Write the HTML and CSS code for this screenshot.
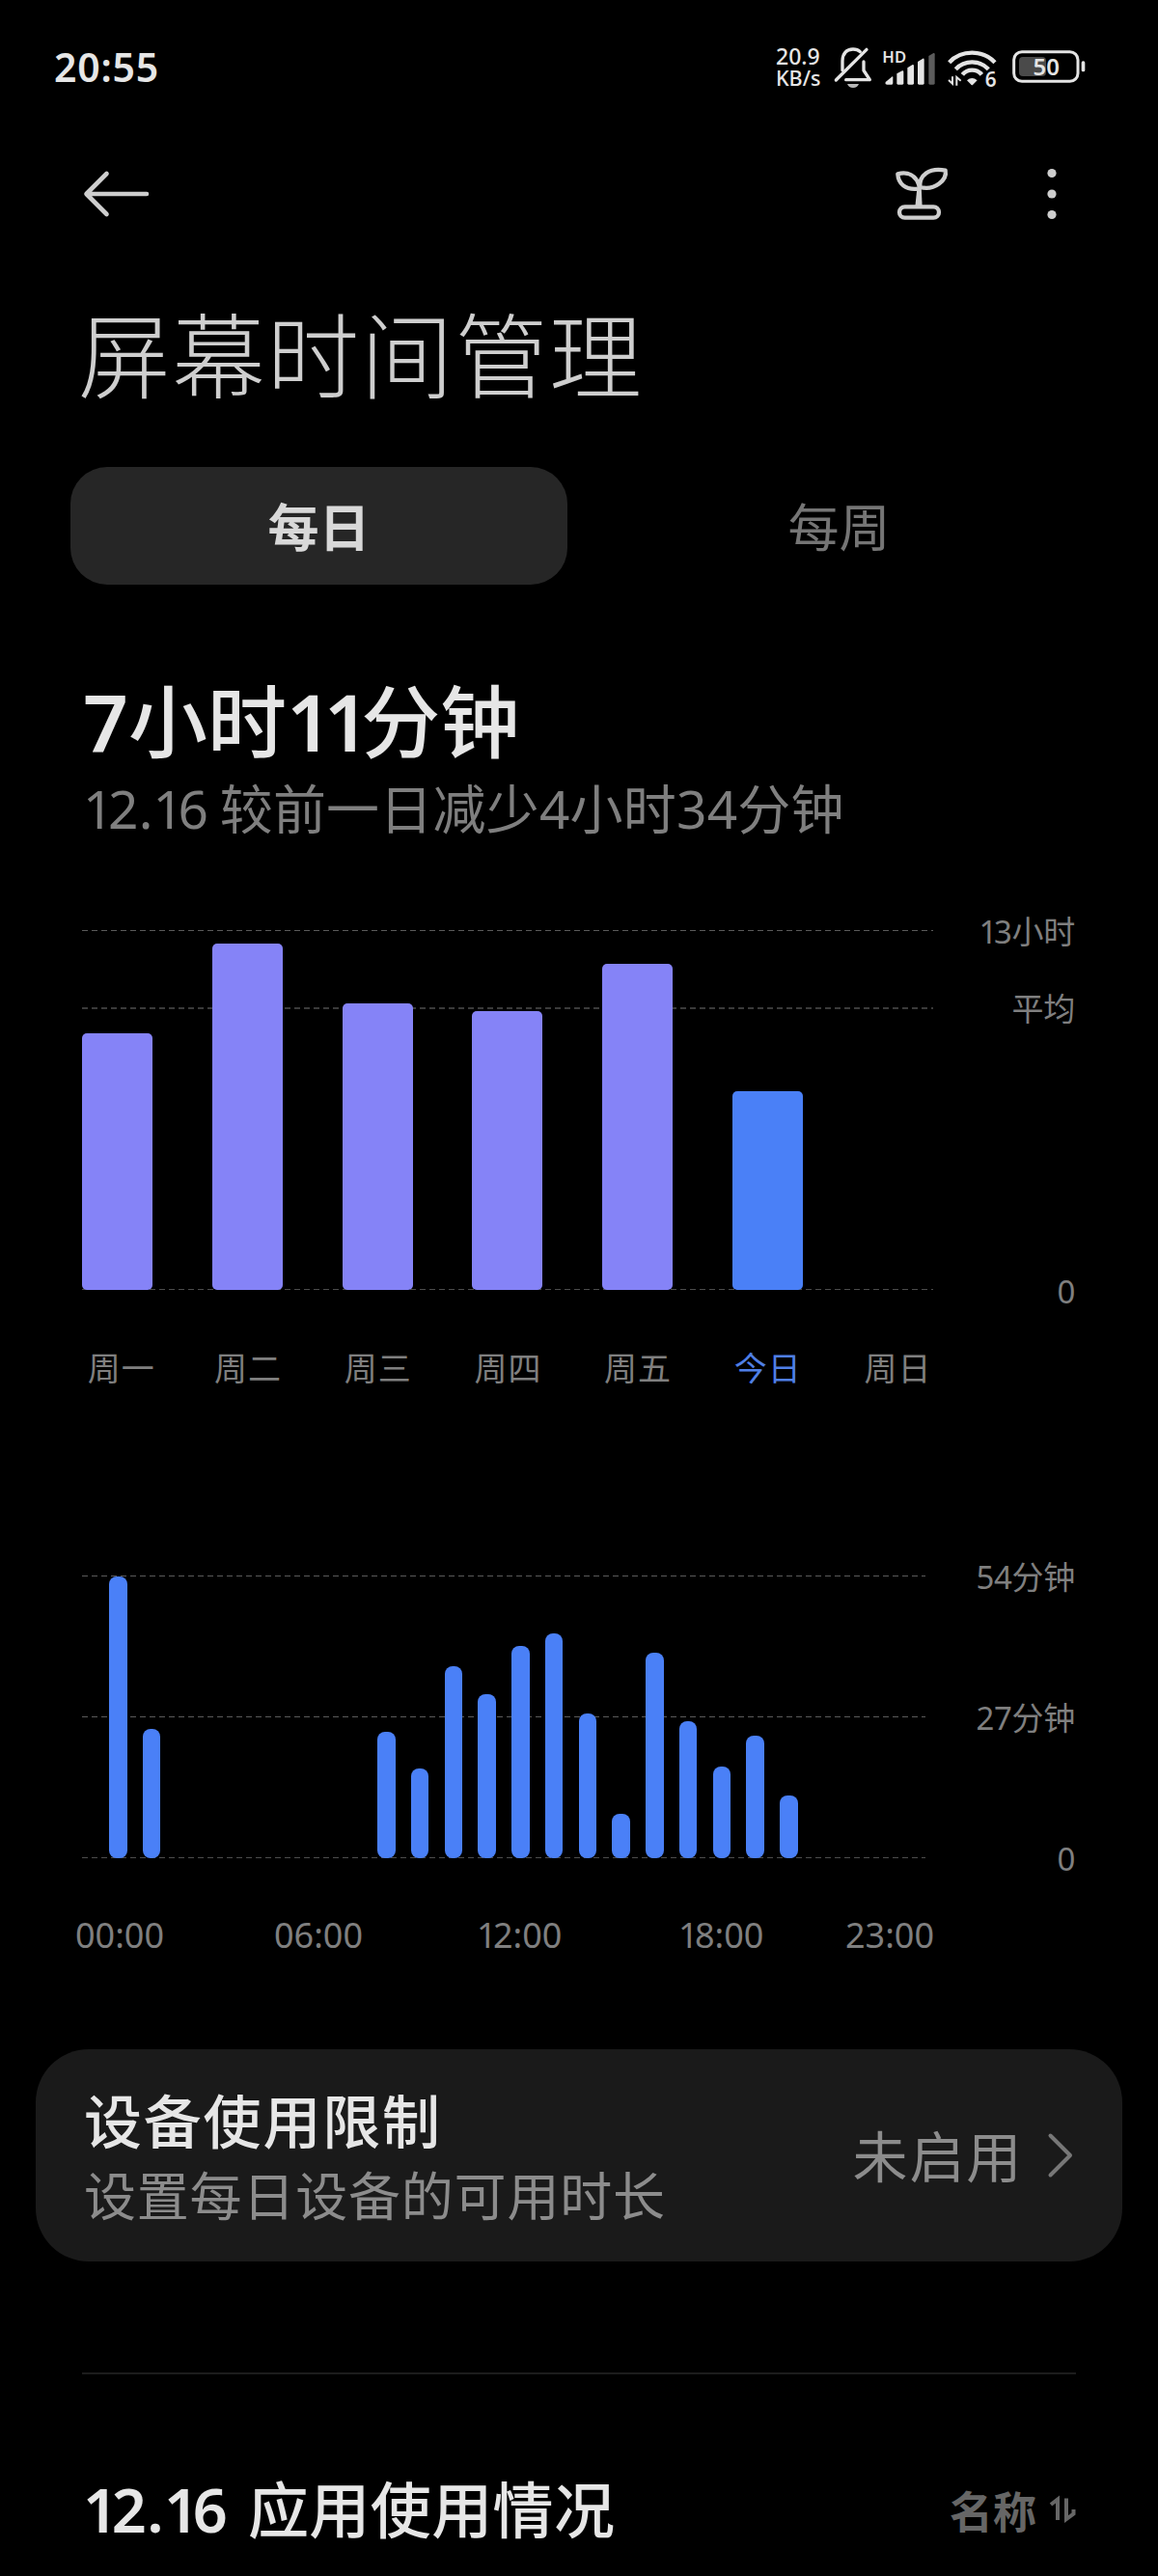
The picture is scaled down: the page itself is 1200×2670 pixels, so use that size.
FILE: index.html
```html
<!DOCTYPE html>
<html lang="zh-CN">
    <head>
        <meta charset="UTF-8">
        <title>屏幕时间管理</title>
        <link rel="stylesheet" href="styles.css">
    </head>

    <body>
        <div class="status-bar">
            <span class="clock">20:55</span>
            <div class="net-speed"><span>20.9</span><span class="unit">KB/s</span></div>
            <svg class="icon-bell" width="40" height="44" viewBox="0 0 120 132">
                <g fill="none" stroke="#e4e4e4" stroke-width="10" stroke-linecap="round" stroke-linejoin="round">
                    <path d="M7 105L102 10"/>
                    <path d="M27 74V46C27 22 40 9 60 9C70 9 77 12 82 17"/>
                    <path d="M93 48V75L112 104H38"/>
                </g>
                <path d="M42 117H78C75 125 69 129 60 129S45 125 42 117Z" fill="#b8b8b8"/>
            </svg>
            <svg class="icon-signal" width="54" height="40" viewBox="0 0 162 120">
                <text x="-2" y="49" class="hd">HD</text>
                <g fill="#e4e4e4">
                    <path d="M9 107L29 91Q31 90 31 94V112Q31 116 27 116H13Q7 116 7 111Z"/>
                    <path d="M43 82L60 73Q64 72 64 77V112Q64 116 60 116H47Q43 116 43 112Z"/>
                    <path d="M76 64L92 54Q96 53 96 58V112Q96 116 92 116H80Q76 116 76 112Z"/>
                    <path d="M108 45L124 35Q128 34 128 39V112Q128 116 124 116H112Q108 116 108 112Z"/>
                </g>
                <path d="M142 27L157 18Q161 17 161 22V112Q161 116 157 116H146Q142 116 142 112Z" fill="#5c5c5c"/>
            </svg>
            <svg class="icon-wifi" width="54" height="42" viewBox="0 0 162 126">
                <g fill="none" stroke="#e4e4e4" stroke-width="13">
                    <path d="M5 47C43 7 109 7 147 47"/>
                    <path d="M25 68C53 39 99 39 127 68"/>
                    <path d="M46 85C61 66 91 66 106 85"/>
                </g>
                <path d="M60 103Q76 89 92 103L78 117Q76 119 74 117Z" fill="#e4e4e4"/>
                <path d="M3 102L15 113V91M28 119V93L41 104" fill="none" stroke="#e4e4e4" stroke-width="6"/>
                <text x="116" y="124" class="gen">6</text>
            </svg>
            <svg class="icon-battery" width="76" height="34" viewBox="0 0 228 102">
                <rect x="5" y="5" width="199" height="92" rx="25" fill="none" stroke="#e4e4e4" stroke-width="9"/>
                <rect x="21" y="21" width="84" height="60" rx="12" fill="#4a4a4a"/>
                <rect x="215" y="34" width="11" height="33" rx="5" fill="#e4e4e4"/>
                <text x="106" y="77" class="level">50</text>
            </svg>
        </div>

        <div class="toolbar">
            <svg class="back" width="68" height="48" viewBox="0 0 68 48">
                <path d="M65 24H3M23.5 3L2.5 24L23.5 45" fill="none" stroke="#cecece" stroke-width="4.6" stroke-linecap="round" stroke-linejoin="round"/>
            </svg>
            <svg class="sprout" width="56" height="58" viewBox="0 0 168 174">
                <g fill="none" stroke="#cecece" stroke-width="13" stroke-linejoin="round">
                    <path d="M74 62C64 29 38 17 7 25C9 56 31 75 69 71"/>
                    <path d="M76 66C73 30 104 4 155 14C161 44 122 78 76 66Z"/>
                    <rect x="12" y="127" width="123" height="34" rx="17"/>
                </g>
                <path d="M68 60H80L83 127H61Z" fill="#cecece"/>
            </svg>
            <svg class="more" width="10" height="54" viewBox="0 0 10 54">
                <g fill="#cecece">
                    <circle cx="5" cy="5.5" r="4.6"/>
                    <circle cx="5" cy="27" r="4.6"/>
                    <circle cx="5" cy="48.5" r="4.6"/>
                </g>
            </svg>
        </div>

        <h1 class="title">屏幕时间管理</h1>

        <div class="tabs">
            <div class="tab active">每日</div>
            <div class="tab">每周</div>
        </div>

        <div class="total"><span class="num">7</span>小时<span class="num one">11</span>分钟</div>
        <div class="compare"><span class="one">1</span>2.<span class="one">1</span>6 较前一日减少4小时34分钟</div>

        <div class="chart week">
            <div class="plot">
                <div class="bar" style="height: 266px"></div>
                <div class="bar" style="height: 359px"></div>
                <div class="bar" style="height: 297px"></div>
                <div class="bar" style="height: 289px"></div>
                <div class="bar" style="height: 338px"></div>
                <div class="bar today" style="height: 206px"></div>
                <div class="bar" style="height: 0"></div>
            </div>
            <div class="scale">
                <span><span class="one">1</span>3小时</span>
                <span>平均</span>
                <span>0</span>
            </div>
        </div>
        <div class="days">
            <span class="first">周一</span>
            <span>周二</span>
            <span>周三</span>
            <span>周四</span>
            <span>周五</span>
            <span class="now">今日</span>
            <span>周日</span>
        </div>

        <div class="chart hours">
            <div class="plot">
                <div class="bar" style="height: 292px"></div>
                <div class="bar" style="height: 134px"></div>
                <div class="bar" style="height: 0"></div>
                <div class="bar" style="height: 0"></div>
                <div class="bar" style="height: 0"></div>
                <div class="bar" style="height: 0"></div>
                <div class="bar" style="height: 0"></div>
                <div class="bar" style="height: 0"></div>
                <div class="bar" style="height: 131px"></div>
                <div class="bar" style="height: 93px"></div>
                <div class="bar" style="height: 199px"></div>
                <div class="bar" style="height: 170px"></div>
                <div class="bar" style="height: 220px"></div>
                <div class="bar" style="height: 233px"></div>
                <div class="bar" style="height: 150px"></div>
                <div class="bar" style="height: 46px"></div>
                <div class="bar" style="height: 213px"></div>
                <div class="bar" style="height: 142px"></div>
                <div class="bar" style="height: 95px"></div>
                <div class="bar" style="height: 127px"></div>
                <div class="bar" style="height: 65px"></div>
            </div>
            <div class="scale">
                <span>54分钟</span>
                <span>27分钟</span>
                <span>0</span>
            </div>
        </div>
        <div class="times">
            <span>00:00</span>
            <span>06:00</span>
            <span><span class="one">1</span>2:00</span>
            <span><span class="one">1</span>8:00</span>
            <span>23:00</span>
        </div>

        <div class="limit-card">
            <div class="limit-text">
                <div class="limit-title">设备使用限制</div>
                <div class="limit-desc">设置每日设备的可用时长</div>
            </div>
            <span class="limit-state">未启用</span>
            <svg class="chevron" width="26" height="46" viewBox="0 0 26 46">
                <path d="M2.5 2.5L23 23L2.5 43.5" fill="none" stroke="#777" stroke-width="4" stroke-linecap="round" stroke-linejoin="round"/>
            </svg>
        </div>

        <div class="apps-header">
            <h2><span class="num"><span class="one">1</span>2.<span class="one">1</span>6</span> 应用使用情况</h2>
            <span class="sort">名称</span>
            <svg class="sort-icon" width="28" height="26" viewBox="0 0 28 26">
                <path d="M2 8L9 2.5V24M18 1.5V23L25.5 17.5V13" fill="none" stroke="#666" stroke-width="4"/>
            </svg>
        </div>
    </body>

</html>
```

FILE: styles.css
```css
* {
    box-sizing: border-box;
}

body {
    margin: 0;
    width: 1200px;
    height: 2670px;
    overflow: hidden;
    background-color: #000;
    color: #e6e6e6;
    font-family: "Noto Sans", "Noto Sans CJK SC", sans-serif;
    white-space: nowrap;
}

svg {
    overflow: visible;
}

/* the "1" is narrower than the other digits */
.one {
    letter-spacing: -0.1em;
}

.num {
    font-weight: 600;
}

.status-bar {
    display: flex;
    align-items: flex-start;
    height: 140px;
    padding: 47px 75px 0 56px;
}

.clock {
    margin-right: auto;
    font-size: 41px;
    font-weight: 600;
    line-height: 44px;
    letter-spacing: 0.8px;
}

.net-speed {
    display: flex;
    flex-direction: column;
    width: 50px;
    margin-right: 10px;
    font-size: 23px;
    font-weight: 500;
    line-height: 23px;
}

.net-speed .unit {
    font-size: 21.5px;
    line-height: 22px;
}

.icon-bell {
    margin: 1px 11px 0 0;
}

.icon-signal {
    margin: 2px 13px 0 0;
}

.icon-wifi {
    margin: 2px 13px 0 0;
}

.icon-battery {
    margin-top: 5px;
}

.status-bar text {
    fill: #e4e4e4;
    font-weight: 600;
}

.status-bar .hd {
    font-size: 50px;
}

.status-bar .gen {
    font-size: 62px;
}

.status-bar .level {
    font-size: 72px;
    text-anchor: middle;
}

.toolbar {
    display: flex;
    align-items: center;
    height: 122px;
    padding: 0 105px 0 87px;
}

.sprout {
    margin: 0 101px 0 auto;
}

.title {
    margin: 46px 0 0 81px;
    font-size: 96px;
    font-weight: 300;
    line-height: 120px;
    letter-spacing: 1.6px;
    color: #cecece;
}

.tabs {
    display: grid;
    grid-template-columns: 515px 515px;
    gap: 24px;
    margin: 56px 73px 0;
}

.tab {
    height: 122px;
    border-radius: 38px;
    font-size: 53px;
    line-height: 125px;
    text-align: center;
    color: #757575;
}

.tab.active {
    background-color: #262626;
    font-weight: 700;
    color: #d8d8d8;
}

.total {
    margin: 91px 0 0 86px;
    font-size: 82px;
    font-weight: 500;
    line-height: 100px;
}

.compare {
    margin: 5px 0 0 86px;
    font-size: 55px;
    line-height: 72px;
    word-spacing: -3px;
    letter-spacing: 0.2px;
    color: #7f7f7f;
}

.chart {
    display: flex;
    justify-content: space-between;
    margin: 0 86px 0 85px;
}

.plot {
    display: flex;
    align-items: flex-end;
    background-repeat: no-repeat;
    background-image:
        repeating-linear-gradient(90deg, #5a5a5a 0 6px, transparent 6px 10px),
        repeating-linear-gradient(90deg, #3a3a3a 0 6px, transparent 6px 10px),
        repeating-linear-gradient(90deg, #4c4c4c 0 6px, transparent 6px 10px);
}

.scale {
    display: flex;
    flex-direction: column;
    justify-content: space-between;
    text-align: right;
    font-size: 33px;
    line-height: 40px;
    letter-spacing: -0.3px;
    color: #7f7f7f;
}

.week {
    height: 373px;
    margin-top: 90px;
}

.week .plot {
    width: 882px;
    gap: 61.8px;
    background-size: 100% 1px, 100% 2px, 100% 1px;
    background-position: 0 0, 0 80px, 0 100%;
}

.week .bar {
    flex: none;
    width: 73px;
    border-radius: 5px;
    background-color: #8583f7;
}

.week .bar.today {
    background-color: #4a80f7;
}

.week .scale {
    margin: -18px 0 -22px;
}

.week .scale > span:nth-child(2) {
    margin-bottom: 213px;
}

.days {
    display: grid;
    grid-template-columns: repeat(7, 134.7px);
    margin: 56px 0 0 55px;
    text-align: center;
    font-size: 34px;
    line-height: 50px;
    letter-spacing: 1px;
    color: #7f7f7f;
}

.days .first {
    padding-left: 7px;
}

.days .now {
    color: #4f7fe6;
}

.hours {
    height: 293px;
    margin-top: 190px;
}

.hours .plot {
    width: 874px;
    padding-left: 28px;
    gap: 16.25px;
    background-image:
        repeating-linear-gradient(90deg, #5a5a5a 0 6px, transparent 6px 10px),
        repeating-linear-gradient(90deg, #5a5a5a 0 6px, transparent 6px 10px),
        repeating-linear-gradient(90deg, #4c4c4c 0 6px, transparent 6px 10px);
    background-size: 100% 1px;
    background-position: 0 0, 0 146px, 0 100%;
}

.hours .bar {
    flex: none;
    width: 18.5px;
    border-radius: 8px;
    background-color: #4a80f7;
}

.hours .scale {
    margin: -18px 0 -21px;
}

.times {
    display: grid;
    grid-template-columns: 206px 210px 209px 173px 120px;
    margin: 55px 0 0 78px;
    font-size: 36px;
    line-height: 50px;
    color: #7f7f7f;
}

.limit-card {
    display: flex;
    align-items: center;
    height: 220px;
    margin: 93px 37px 0;
    padding: 0 51px 0 50px;
    border-radius: 55px;
    background-color: #1a1a1a;
}

.limit-text {
    margin-right: auto;
    padding-top: 7px;
}

.limit-title {
    font-size: 60px;
    font-weight: 500;
    line-height: 78px;
    letter-spacing: 1.8px;
}

.limit-desc {
    font-size: 54px;
    line-height: 77px;
    letter-spacing: 0.8px;
    color: #8c8c8c;
}

.limit-state {
    margin-right: 26px;
    padding-top: 2px;
    font-size: 57px;
    line-height: 78px;
    letter-spacing: 1.8px;
    color: #8c8c8c;
}

.apps-header {
    display: flex;
    align-items: center;
    margin: 115px 85px 0;
    padding-top: 95px;
    border-top: 2px solid #1c1c1c;
}

.apps-header h2 {
    margin: 0 auto 0 1px;
    font-size: 63px;
    font-weight: 500;
    line-height: 90px;
    letter-spacing: 0.4px;
    word-spacing: 4px;
}

.apps-header .one {
    letter-spacing: -0.1em;
}

.sort {
    margin-right: 13px;
    font-size: 45px;
    font-weight: 700;
    color: #666;
}
```
